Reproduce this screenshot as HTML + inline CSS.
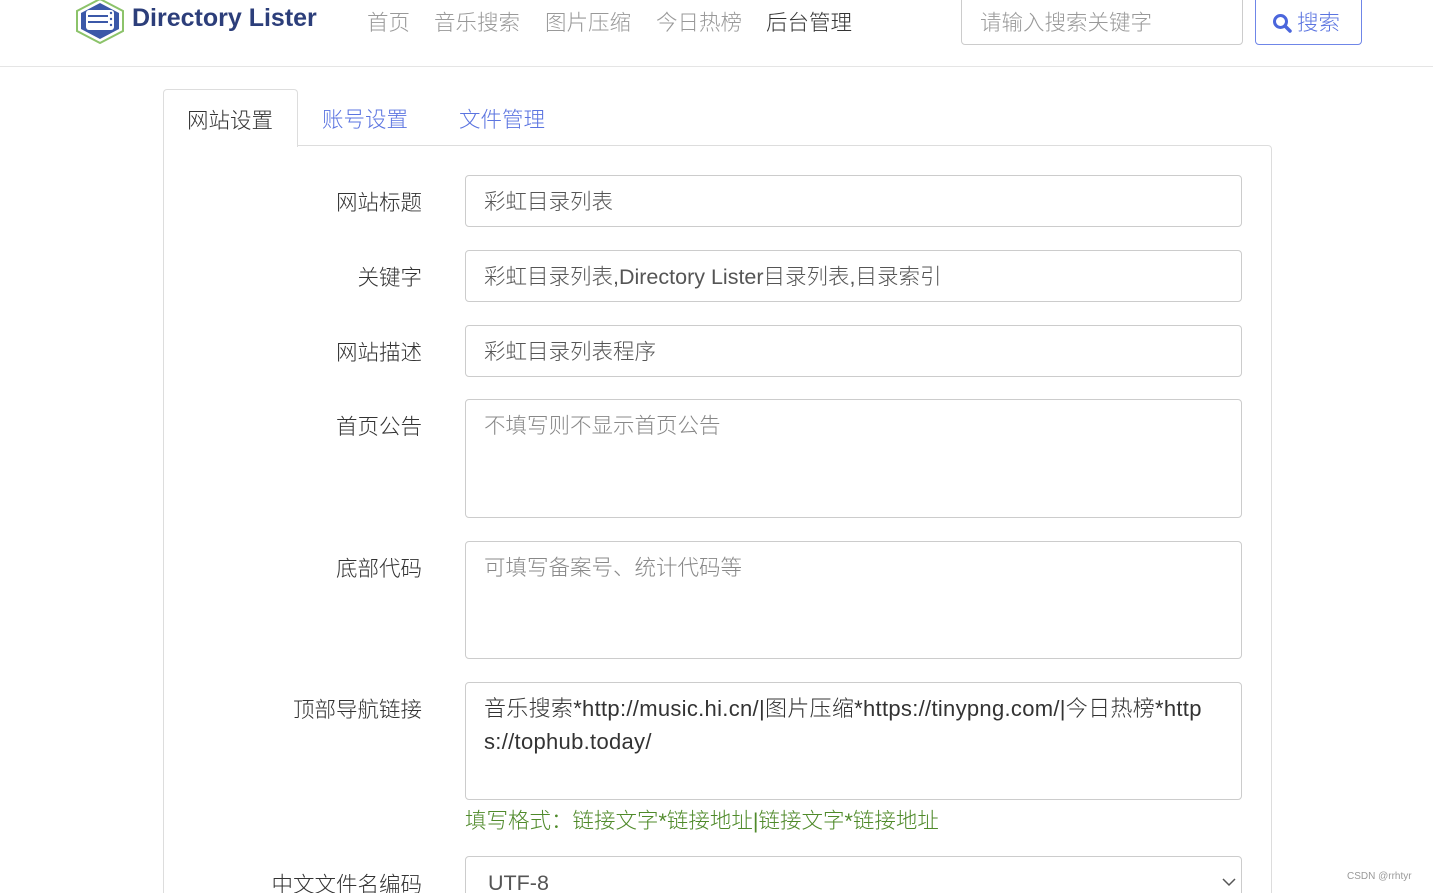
<!DOCTYPE html>
<html style="overflow:hidden"><head><meta charset="utf-8"><style>
*{box-sizing:border-box}
html,body{margin:0;width:1433px;height:893px;overflow:hidden}
body{background:#fff;font-family:"Liberation Sans","Noto Sans CJK SC",sans-serif;font-weight:300;color:#333;position:relative}
.hdr{position:absolute;left:0;top:0;width:1433px;height:67px;border-bottom:1px solid #e5e5e5}
.a{position:absolute}
.nav{top:6px;font-size:21.5px;color:#999}
.lbl{position:absolute;right:1011px;font-size:21.5px;color:#333;text-align:right;white-space:nowrap}
.inp{position:absolute;left:465px;width:777px;border:1px solid #ccc;border-radius:4px;font-size:21.5px;padding:12px 18px;color:#555;line-height:28px;overflow:hidden}
.ph{color:#888}
</style></head><body>
<div class="hdr">
 <svg class="a" style="left:74px;top:-2px" width="52" height="46" viewBox="0 0 52 46">
  <polygon points="26,1 49,13 49,33 26,45 3,33 3,13" fill="#fff" stroke="#8cc36a" stroke-width="2"/>
  <polygon points="26,5 45,15 45,31 26,41 7,31 7,15" fill="#3b58a8"/>
  <rect x="12" y="12" width="28" height="20" rx="3" fill="#fff"/>
  <line x1="14" y1="18" x2="34" y2="18" stroke="#3b58a8" stroke-width="2"/>
  <line x1="14" y1="24" x2="34" y2="24" stroke="#3b58a8" stroke-width="2"/>
  <circle cx="37" cy="15" r="1.2" fill="#3b58a8"/><circle cx="37" cy="21" r="1.2" fill="#3b58a8"/><circle cx="37" cy="27" r="1.2" fill="#3b58a8"/>
 </svg>
 <div class="a" style="left:132px;top:4px;font-size:25px;font-weight:bold;color:#2c3e7a">Directory Lister</div>
 <div class="a nav" style="left:367px">首页</div>
 <div class="a nav" style="left:434px">音乐搜索</div>
 <div class="a nav" style="left:545px">图片压缩</div>
 <div class="a nav" style="left:656px">今日热榜</div>
 <div class="a nav" style="left:766px;color:#333">后台管理</div>
 <div class="a" style="left:961px;top:-5px;width:282px;height:50px;border:1px solid #ccc;border-radius:4px;font-size:21.5px;color:#999;padding:10px 18px">请输入搜索关键字</div>
 <div class="a" style="left:1255px;top:-5px;width:107px;height:50px;border:1px solid #6f86e8;border-radius:4px;font-size:21.5px;color:#5b74e0;padding:10px 16px">
  <svg width="20" height="20" viewBox="0 0 20 20" style="vertical-align:-3px;margin-right:5px"><circle cx="8.5" cy="8.5" r="6" fill="none" stroke="#4b66dc" stroke-width="3"/><line x1="13" y1="13" x2="18" y2="18" stroke="#4b66dc" stroke-width="3.5" stroke-linecap="round"/></svg>搜索</div>
</div>
<div class="a" style="left:163px;top:89px;width:135px;height:58px;border:1px solid #ddd;border-bottom:none;border-radius:4px 4px 0 0;background:#fff;z-index:2;font-size:21.5px;padding:14px 0 0 23px">网站设置</div>
<div class="a" style="left:322px;top:103px;font-size:21.5px;color:#5b74e0">账号设置</div>
<div class="a" style="left:459px;top:103px;font-size:21.5px;color:#5b74e0">文件管理</div>
<div class="a" style="left:163px;top:145px;width:1109px;height:760px;border:1px solid #ddd;border-radius:0 4px 4px 4px"></div>

<div class="lbl" style="top:186px">网站标题</div>
<div class="inp" style="top:175px;height:52px">彩虹目录列表</div>
<div class="lbl" style="top:261px">关键字</div>
<div class="inp" style="top:250px;height:52px">彩虹目录列表,Directory Lister目录列表,目录索引</div>
<div class="lbl" style="top:336px">网站描述</div>
<div class="inp" style="top:325px;height:52px">彩虹目录列表程序</div>
<div class="lbl" style="top:410px">首页公告</div>
<div class="inp ph" style="top:399px;height:119px">不填写则不显示首页公告</div>
<div class="lbl" style="top:552px">底部代码</div>
<div class="inp ph" style="top:541px;height:118px">可填写备案号、统计代码等</div>
<div class="lbl" style="top:693px">顶部导航链接</div>
<div class="inp" style="top:682px;height:118px;color:#333;line-height:33px;padding-top:9px;padding-right:30px;word-break:break-all;font-size:22px;letter-spacing:0.3px">音乐搜索*http://music.hi.cn/|图片压缩*https://tinypng.com/|今日热榜*https://tophub.today/</div>
<div class="a" style="left:465px;top:804px;font-size:21.5px;color:#4f8a2a">填写格式：链接文字*链接地址|链接文字*链接地址</div>
<div class="lbl" style="top:868px">中文文件名编码</div>
<div class="inp" style="top:856px;height:60px;padding-left:22px">UTF-8</div>
<svg class="a" style="left:1222px;top:877px" width="14" height="10"><polyline points="1,2 7,8 13,2" fill="none" stroke="#555" stroke-width="1.5"/></svg>
<div class="a" style="left:1347px;top:871px;font-size:10px;color:#999">CSDN @rrhtyr</div>
</body></html>
